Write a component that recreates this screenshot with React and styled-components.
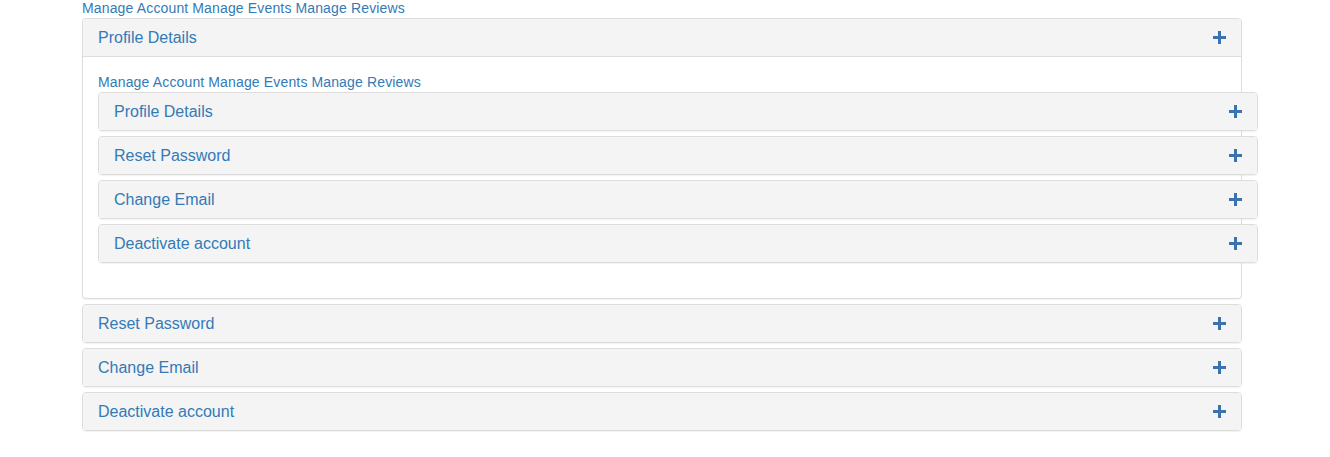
import React from "react";
import styled, { createGlobalStyle } from "styled-components";

const GlobalStyle = createGlobalStyle`
  html, body {
    margin: 0;
    padding: 0;
    background: #fff;
    font-family: "Liberation Sans", Arial, Helvetica, sans-serif;
    font-size: 14px;
    line-height: 1.42857143;
    color: #333;
  }
`;

const Page = styled.div`
  padding-left: 82px;
`;

const Nav = styled.div`
  line-height: 20px;
  height: 20px;
  margin-top: ${p => p.$offset || 0}px;
  white-space: nowrap;
`;

const NavLink = styled.a`
  color: #337ab7;
  text-decoration: none;
  font-size: 14px;
  letter-spacing: 0.15px;
`;

const PanelGroup = styled.div`
  width: 1160px;
  margin-bottom: 20px;
`;

const Panel = styled.div`
  background: #fff;
  border: 1px solid #ddd;
  border-radius: 4px;
  box-shadow: 0 1px 1px rgba(0, 0, 0, 0.05);
  & + & {
    margin-top: 5px;
  }
`;

const Heading = styled.div`
  display: flex;
  align-items: center;
  justify-content: space-between;
  height: 17px;
  padding: 10px 15px;
  background: #f4f4f4;
  border-radius: 3px 3px 0 0;
  border-bottom: ${p => (p.$open ? "1px solid #ddd" : "0")};
`;

const Title = styled.a`
  color: #337ab7;
  font-size: 16px;
  line-height: 17px;
  text-decoration: none;
`;

const Body = styled.div`
  padding: 15px;
`;

const Plus = () => (
  <svg width="13" height="13" viewBox="0 0 13 13">
    <path d="M5 0h3v5h5v3H8v5H5V8H0V5h5z" fill="#3a73b0" />
  </svg>
);

const sections = ["Profile Details", "Reset Password", "Change Email", "Deactivate account"];

function Links({ offset }) {
  return (
    <Nav $offset={offset}>
      <NavLink href="#">Manage Account</NavLink>{" "}
      <NavLink href="#">Manage Events</NavLink>{" "}
      <NavLink href="#">Manage Reviews</NavLink>
    </Nav>
  );
}

function Accordion({ openFirst }) {
  return (
    <PanelGroup>
      {sections.map((s, i) => {
        const open = openFirst && i === 0;
        return (
          <Panel key={s}>
            <Heading $open={open}>
              <Title href="#">{s}</Title>
              <Plus />
            </Heading>
            {open && (
              <Body>
                <Links />
                <Accordion />
              </Body>
            )}
          </Panel>
        );
      })}
    </PanelGroup>
  );
}

export default function App() {
  return (
    <Page>
      <GlobalStyle />
      <Links offset={-2} />
      <Accordion openFirst />
    </Page>
  );
}
